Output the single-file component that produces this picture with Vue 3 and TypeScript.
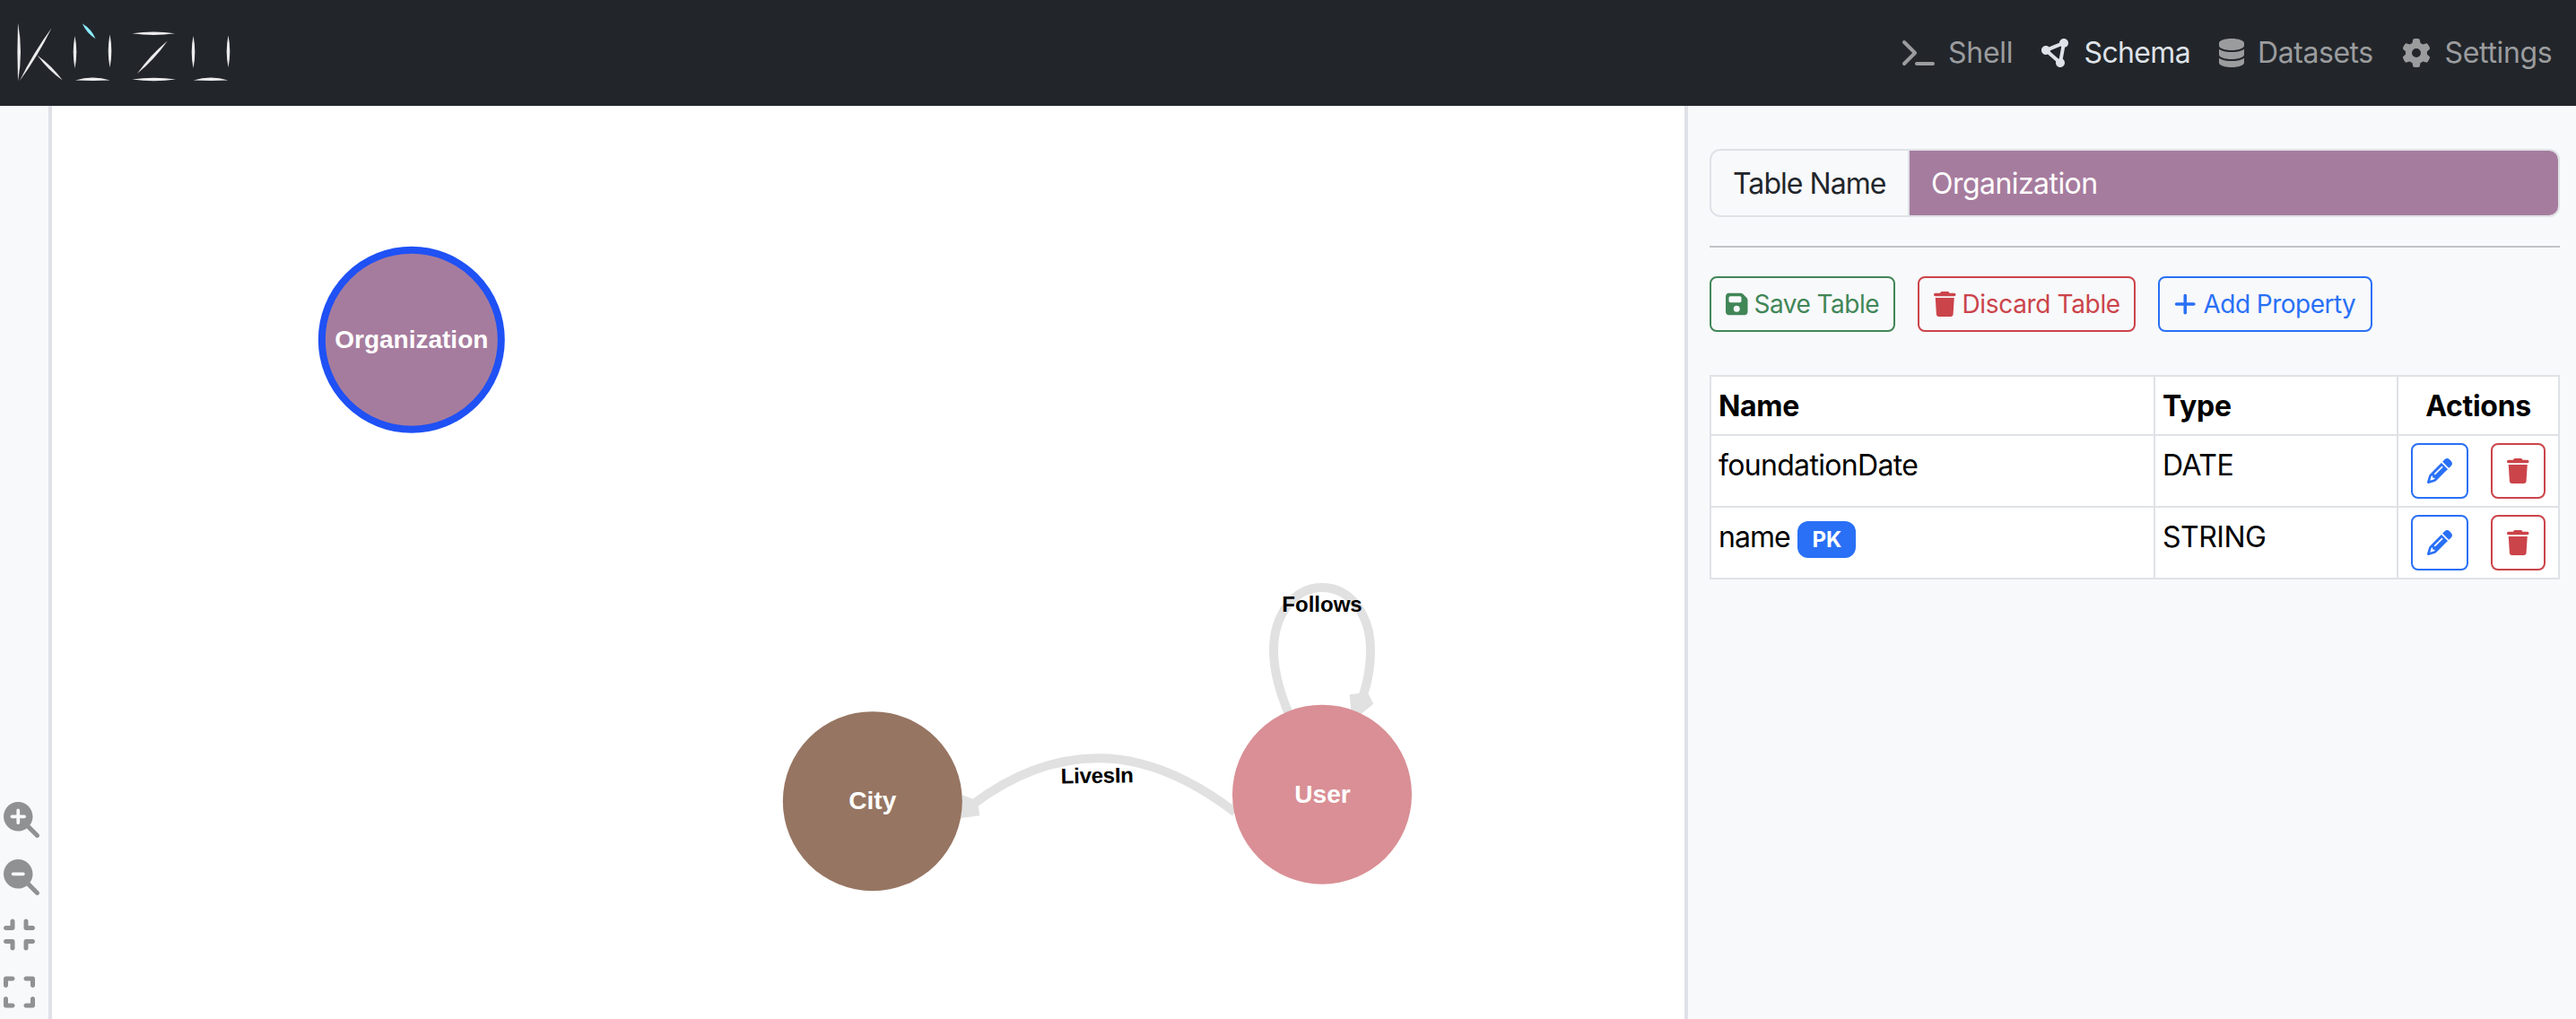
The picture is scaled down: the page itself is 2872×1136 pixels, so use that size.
<script setup lang="ts">
interface Icon {
  width: number
  path: string
}

const icons: Record<string, Icon> = {
  terminal: {
    width: 576,
    path: 'M9.4 86.6C-3.1 74.1-3.1 53.9 9.4 41.4s32.8-12.5 45.3 0l192 192c12.5 12.5 12.5 32.8 0 45.3l-192 192c-12.5 12.5-32.8 12.5-45.3 0s-12.5-32.8 0-45.3L178.7 256 9.4 86.6zM256 416H544c17.7 0 32 14.3 32 32s-14.3 32-32 32H256c-17.7 0-32-14.3-32-32s14.3-32 32-32z',
  },
  nodes: {
    width: 512,
    path: 'M418.4 157.9c35.3-8.3 61.6-40 61.6-77.9c0-44.2-35.8-80-80-80c-43.4 0-78.7 34.5-80 77.5L136.2 151.1C121.7 136.8 101.9 128 80 128c-44.2 0-80 35.8-80 80s35.8 80 80 80c12.2 0 23.8-2.7 34.1-7.6L259.7 407.8c-2.4 7.6-3.7 15.8-3.7 24.2c0 44.2 35.8 80 80 80s80-35.8 80-80c0-27.7-14-52.1-35.4-66.4l37.8-207.7zM156.3 232.2c2.2-6.9 3.5-14.2 3.7-21.7l183.8-73.5c3.6 3.5 7.4 6.7 11.6 9.5L317.6 354.1c-5.5 1.3-10.8 3.1-15.8 5.5L156.3 232.2z',
  },
  database: {
    width: 448,
    path: 'M448 80v48c0 44.2-100.3 80-224 80S0 172.2 0 128V80C0 35.8 100.3 0 224 0S448 35.8 448 80zM393.2 214.7c20.8-7.4 39.9-16.9 54.8-28.6V288c0 44.2-100.3 80-224 80S0 332.2 0 288V186.1c14.9 11.8 34 21.2 54.8 28.6C99.7 230.7 159.5 240 224 240s124.3-9.3 169.2-25.3zM0 346.1c14.9 11.8 34 21.2 54.8 28.6C99.7 390.7 159.5 400 224 400s124.3-9.3 169.2-25.3c20.8-7.4 39.9-16.9 54.8-28.6V432c0 44.2-100.3 80-224 80S0 476.2 0 432V346.1z',
  },
  gear: {
    width: 512,
    path: 'M495.9 166.6c3.2 8.7 .5 18.4-6.4 24.6l-43.3 39.4c1.1 8.3 1.7 16.8 1.7 25.4s-.6 17.1-1.7 25.4l43.3 39.4c6.9 6.2 9.6 15.9 6.4 24.6c-4.4 11.9-9.7 23.3-15.8 34.3l-4.7 8.1c-6.6 11-14 21.4-22.1 31.2c-5.9 7.2-15.7 9.6-24.5 6.8l-55.7-17.7c-13.4 10.3-28.2 18.9-44 25.4l-12.5 57.1c-2 9.1-9 16.3-18.2 17.8c-13.8 2.3-28 3.5-42.5 3.5s-28.7-1.2-42.5-3.5c-9.2-1.5-16.2-8.7-18.2-17.8l-12.5-57.1c-15.8-6.5-30.6-15.1-44-25.4L83.1 425.9c-8.8 2.8-18.6 .3-24.5-6.8c-8.1-9.8-15.5-20.2-22.1-31.2l-4.7-8.1c-6.1-11-11.4-22.4-15.8-34.3c-3.2-8.7-.5-18.4 6.4-24.6l43.3-39.4C64.6 273.1 64 264.6 64 256s.6-17.1 1.7-25.4L22.4 191.2c-6.9-6.2-9.6-15.9-6.4-24.6c4.4-11.9 9.7-23.3 15.8-34.3l4.7-8.1c6.6-11 14-21.4 22.1-31.2c5.9-7.2 15.7-9.6 24.5-6.8l55.7 17.7c13.4-10.3 28.2-18.9 44-25.4l12.5-57.1c2-9.1 9-16.3 18.2-17.8C227.3 1.2 241.5 0 256 0s28.7 1.2 42.5 3.5c9.2 1.5 16.2 8.7 18.2 17.8l12.5 57.1c15.8 6.5 30.6 15.1 44 25.4l55.7-17.7c8.8-2.8 18.6-.3 24.5 6.8c8.1 9.8 15.5 20.2 22.1 31.2l4.7 8.1c6.1 11 11.4 22.4 15.8 34.3zM256 336a80 80 0 1 0 0-160 80 80 0 1 0 0 160z',
  },
  zoomIn: {
    width: 512,
    path: 'M416 208c0 45.9-14.9 88.3-40 122.7L502.6 457.4c12.5 12.5 12.5 32.8 0 45.3s-32.8 12.5-45.3 0L330.7 376c-34.4 25.2-76.8 40-122.7 40C93.1 416 0 322.9 0 208S93.1 0 208 0S416 93.1 416 208zM184 296c0 13.3 10.7 24 24 24s24-10.7 24-24V232h64c13.3 0 24-10.7 24-24s-10.7-24-24-24H232V120c0-13.3-10.7-24-24-24s-24 10.7-24 24v64H120c-13.3 0-24 10.7-24 24s10.7 24 24 24h64v64z',
  },
  zoomOut: {
    width: 512,
    path: 'M416 208c0 45.9-14.9 88.3-40 122.7L502.6 457.4c12.5 12.5 12.5 32.8 0 45.3s-32.8 12.5-45.3 0L330.7 376c-34.4 25.2-76.8 40-122.7 40C93.1 416 0 322.9 0 208S93.1 0 208 0S416 93.1 416 208zM136 184c-13.3 0-24 10.7-24 24s10.7 24 24 24H280c13.3 0 24-10.7 24-24s-10.7-24-24-24H136z',
  },
  compress: {
    width: 448,
    path: 'M160 64c0-17.7-14.3-32-32-32s-32 14.3-32 32v64H32c-17.7 0-32 14.3-32 32s14.3 32 32 32h96c17.7 0 32-14.3 32-32V64zM32 320c-17.7 0-32 14.3-32 32s14.3 32 32 32H96v64c0 17.7 14.3 32 32 32s32-14.3 32-32V352c0-17.7-14.3-32-32-32H32zM352 64c0-17.7-14.3-32-32-32s-32 14.3-32 32v96c0 17.7 14.3 32 32 32h96c17.7 0 32-14.3 32-32s-14.3-32-32-32H352V64zM320 320c-17.7 0-32 14.3-32 32v96c0 17.7 14.3 32 32 32s32-14.3 32-32V384h64c17.7 0 32-14.3 32-32s-14.3-32-32-32H320z',
  },
  expand: {
    width: 448,
    path: 'M32 32C14.3 32 0 46.3 0 64v96c0 17.7 14.3 32 32 32s32-14.3 32-32V96h64c17.7 0 32-14.3 32-32s-14.3-32-32-32H32zM64 352c0-17.7-14.3-32-32-32s-32 14.3-32 32v96c0 17.7 14.3 32 32 32h96c17.7 0 32-14.3 32-32s-14.3-32-32-32H64V352zM320 32c-17.7 0-32 14.3-32 32s14.3 32 32 32h64v64c0 17.7 14.3 32 32 32s32-14.3 32-32V64c0-17.7-14.3-32-32-32H320zM448 352c0-17.7-14.3-32-32-32s-32 14.3-32 32v64H320c-17.7 0-32 14.3-32 32s14.3 32 32 32h96c17.7 0 32-14.3 32-32V352z',
  },
  save: {
    width: 448,
    path: 'M64 32C28.7 32 0 60.7 0 96V416c0 35.3 28.7 64 64 64H384c35.3 0 64-28.7 64-64V173.3c0-17-6.7-33.3-18.7-45.3L352 50.7C340 38.7 323.7 32 306.7 32H64zm0 96c0-17.7 14.3-32 32-32H288c17.7 0 32 14.3 32 32v64c0 17.7-14.3 32-32 32H96c-17.7 0-32-14.3-32-32V128zM224 288a64 64 0 1 1 0 128 64 64 0 1 1 0-128z',
  },
  trash: {
    width: 448,
    path: 'M135.2 17.7L128 32H32C14.3 32 0 46.3 0 64S14.3 96 32 96H416c17.7 0 32-14.3 32-32s-14.3-32-32-32H320l-7.2-14.3C307.4 6.8 296.3 0 284.2 0H163.8c-12.1 0-23.2 6.8-28.6 17.7zM416 128H32L53.2 467c1.6 25.3 22.6 45 47.9 45H346.9c25.3 0 46.3-19.7 47.9-45L416 128z',
  },
  plus: {
    width: 448,
    path: 'M256 80c0-17.7-14.3-32-32-32s-32 14.3-32 32V224H48c-17.7 0-32 14.3-32 32s14.3 32 32 32H192V432c0 17.7 14.3 32 32 32s32-14.3 32-32V288H400c17.7 0 32-14.3 32-32s-14.3-32-32-32H256V80z',
  },
  pencil: {
    width: 512,
    path: 'M410.3 231l11.3-11.3-33.9-33.9-62.1-62.1L291.7 89.8l-11.3 11.3-22.6 22.6L58.6 322.9c-10.4 10.4-18 23.3-22.2 37.4L1 480.7c-2.5 8.4-.2 17.5 6.1 23.7s15.3 8.5 23.7 6.1l120.3-35.4c14.1-4.2 27-11.8 37.4-22.2L387.7 253.7 410.3 231zM160 399.4l-9.1 22.7c-4 3.1-8.5 5.4-13.3 6.9L59.4 452l23-78.1c1.4-4.9 3.8-9.4 6.9-13.3l22.7-9.1v32c0 8.8 7.2 16 16 16h32zM362.7 18.7L348.3 33.2 325.7 55.8 314.3 67.1l33.9 33.9 62.1 62.1 33.9 33.9 11.3-11.3 22.6-22.6 14.5-14.5c25-25 25-65.5 0-90.5L453.3 18.7c-25-25-65.5-25-90.5 0zm-47.4 168l-144 144c-6.2 6.2-16.4 6.2-22.6 0s-6.2-16.4 0-22.6l144-144c6.2-6.2 16.4-6.2 22.6 0s6.2 16.4 0 22.6z',
  },
}

const viewBox = (name: string) => `0 0 ${icons[name].width} 512`

const navLinks = [
  { key: 'shell', label: 'Shell', icon: 'terminal', active: false },
  { key: 'schema', label: 'Schema', icon: 'nodes', active: true },
  { key: 'datasets', label: 'Datasets', icon: 'database', active: false },
  { key: 'settings', label: 'Settings', icon: 'gear', active: false },
]

const tools = ['zoomIn', 'zoomOut', 'compress', 'expand']

const actions = [
  { key: 'save', label: 'Save Table', icon: 'save' },
  { key: 'discard', label: 'Discard Table', icon: 'trash' },
  { key: 'add', label: 'Add Property', icon: 'plus' },
]

const properties = [
  { name: 'foundationDate', type: 'DATE', primary: false },
  { name: 'name', type: 'STRING', primary: true },
]

/* A stroke that tapers at both ends; a and b are the bulges on either side. */
function blade(x1: number, y1: number, x2: number, y2: number, a: number, b: number): string {
  const length = Math.hypot(x2 - x1, y2 - y1)
  const nx = (y2 - y1) / length
  const ny = -(x2 - x1) / length
  const mx = (x1 + x2) / 2
  const my = (y1 + y2) / 2
  return `M${x1} ${y1}Q${mx + nx * a * 2} ${my + ny * a * 2} ${x2} ${y2}Q${mx - nx * b * 2} ${my - ny * b * 2} ${x1} ${y1}Z`
}

const logoStrokes = [
  blade(20, 25.5, 20, 90.5, 3, 0.6),
  blade(57.5, 31.3, 22, 90, 1.6, 1.6),
  blade(41.7, 61.7, 69.8, 89.6, 1.6, 1.6),
  blade(83.5, 40, 83.5, 76.3, 1.8, 1.8),
  blade(122.5, 38.5, 122.5, 75.3, 1.8, 1.8),
  blade(84, 89.6, 122.7, 89.6, 3, 0.3),
  blade(147.3, 37.3, 195, 37.3, 1.8, 1.8),
  blade(186.8, 45.4, 153, 82, 1.7, 1.7),
  blade(147.3, 88.5, 196, 88.5, 1.8, 1.8),
  blade(215.5, 40, 215.5, 76, 1.8, 1.8),
  blade(254.5, 39.5, 254.5, 75, 1.8, 1.8),
  blade(215.7, 89.6, 254.3, 89.6, 3, 0.3),
]
const logoAccent = blade(91.8, 26.3, 106.6, 43.2, 1.8, 1.8)
</script>

<template>
  <div class="app">
    <header class="navbar">
      <svg class="logo" viewBox="0 0 300 118">
        <path v-for="(d, i) in logoStrokes" :key="i" :d="d" fill="#ececec" />
        <path :d="logoAccent" fill="#8cecfb" />
      </svg>
      <nav class="links">
        <a v-for="link in navLinks" :key="link.key" :class="['link', link.key, { active: link.active }]">
          <svg class="icon" :viewBox="viewBox(link.icon)"><path :d="icons[link.icon].path" /></svg>
          <span>{{ link.label }}</span>
        </a>
      </nav>
    </header>

    <div class="body">
      <aside class="tools">
        <svg v-for="tool in tools" :key="tool" class="tool" :viewBox="viewBox(tool)">
          <path :d="icons[tool].path" />
        </svg>
      </aside>

      <main class="canvas">
        <svg class="graph" viewBox="58 118 1820 1018">
          <g class="edges">
            <path d="M1437 796C1426 770 1420 748 1420 725C1420 685 1443 655 1474 655S1528 685 1528 725C1528 745 1524 764 1518 780" />
            <path d="M1377 905.5C1324 865 1275 845.3 1225.5 845.3S1130 862 1083 898" />
          </g>
          <g class="arrows">
            <path d="M1504.7 774.3L1515.3 773L1526 774L1531.3 784.7L1510 802L1506 790Z" />
            <path d="M1066 884L1083.7 890.3L1090.7 898.7L1092.3 909.3L1066 912.7Z" />
          </g>
          <g class="edge-labels">
            <text x="1474" y="682">Follows</text>
            <text class="lives-in" x="1223.3" y="872.8" transform="rotate(-0.9 1223.3 872.8)">LivesIn</text>
          </g>
          <circle class="organization" cx="458.8" cy="378.8" r="100" />
          <circle class="city" cx="972.8" cy="893.2" r="100" />
          <circle class="user" cx="1474" cy="885.7" r="100" />
          <g class="node-labels">
            <text x="458.8" y="388">Organization</text>
            <text x="972.8" y="902">City</text>
            <text x="1474.5" y="895">User</text>
          </g>
        </svg>
      </main>

      <section class="panel">
        <div class="name-group">
          <label class="name-label">Table Name</label>
          <div class="name-value">Organization</div>
        </div>
        <hr class="rule" />
        <div class="actions">
          <button v-for="action in actions" :key="action.key" :class="['btn', action.key]">
            <svg class="btn-icon" :viewBox="viewBox(action.icon)"><path :d="icons[action.icon].path" /></svg>
            <span>{{ action.label }}</span>
          </button>
        </div>
        <table class="properties">
          <colgroup>
            <col class="col-name" />
            <col class="col-type" />
            <col class="col-actions" />
          </colgroup>
          <thead>
            <tr>
              <th>Name</th>
              <th class="th-type">Type</th>
              <th class="th-actions">Actions</th>
            </tr>
          </thead>
          <tbody>
            <tr v-for="property in properties" :key="property.name">
              <td>
                <div class="cell">
                  <span :class="property.primary ? 'key-name' : 'plain-name'">{{ property.name }}</span>
                  <span v-if="property.primary" class="badge">PK</span>
                </div>
              </td>
              <td>{{ property.type }}</td>
              <td class="td-actions">
                <div class="row-actions">
                  <button class="btn edit">
                    <svg class="btn-icon" :viewBox="viewBox('pencil')"><path :d="icons.pencil.path" /></svg>
                  </button>
                  <button class="btn remove">
                    <svg class="btn-icon" :viewBox="viewBox('trash')"><path :d="icons.trash.path" /></svg>
                  </button>
                </div>
              </td>
            </tr>
          </tbody>
        </table>
      </section>
    </div>
  </div>
</template>

<style>
body {
  margin: 0;
  background: #fff;
}
</style>

<style scoped>
.app {
  display: flex;
  flex-direction: column;
  width: 2872px;
  height: 1136px;
  overflow: hidden;
  font-family: Inter, "Liberation Sans", sans-serif;
  font-size: 32px;
  line-height: 48px;
  letter-spacing: -0.5px;
  color: #000;
}

.navbar {
  display: flex;
  align-items: center;
  flex: none;
  height: 118px;
  background: #22262b;
}

.logo {
  width: 300px;
  height: 118px;
}

.links {
  display: flex;
  margin-left: auto;
}

.link {
  display: flex;
  align-items: center;
  gap: 15.5px;
  color: #9b9c9e;
}

.link.active {
  color: #dfe2e8;
}

.link.shell {
  width: 155.5px;
  letter-spacing: -0.25px;
}

.link.schema {
  width: 197.5px;
  letter-spacing: -0.65px;
}

.link.datasets {
  width: 204.5px;
  letter-spacing: -0.43px;
}

.link.settings {
  width: 194px;
  letter-spacing: -0.33px;
}

.icon {
  flex: none;
  height: 32px;
  fill: currentColor;
}

.body {
  display: flex;
  flex: 1;
  min-height: 0;
}

.tools {
  display: flex;
  flex-direction: column;
  justify-content: flex-end;
  align-items: flex-start;
  gap: 24px;
  flex: none;
  box-sizing: border-box;
  width: 58px;
  padding: 0 0 10px 4px;
  background: #f8f9fb;
  border-right: 4px solid #dfe1e7;
}

.tool {
  height: 40px;
  fill: #909193;
}

.canvas {
  flex: 1;
  min-width: 0;
  background: #fff;
}

.graph {
  display: block;
  width: 1820px;
  height: 1018px;
  font-family: "Liberation Sans", Arial, sans-serif;
  font-weight: 700;
  letter-spacing: 0;
}

.edges path {
  fill: none;
  stroke: #e1e1e1;
  stroke-width: 10;
}

.arrows path {
  fill: #e1e1e1;
}

.edge-labels text {
  font-size: 24px;
  text-anchor: middle;
  fill: #000;
}

.edge-labels .lives-in {
  letter-spacing: -0.25px;
}

.node-labels text {
  font-size: 28px;
  text-anchor: middle;
  fill: #fff;
}

.organization {
  fill: #a67c9e;
  stroke: #1f51f5;
  stroke-width: 8;
}

.city {
  fill: #967562;
}

.user {
  fill: #d98f95;
}

.panel {
  flex: none;
  box-sizing: border-box;
  width: 994px;
  padding: 48px 18px 0 24px;
  background: #f8f9fb;
  border-left: 4px solid #dfe1e7;
}

.name-group {
  display: flex;
  box-sizing: border-box;
  height: 76px;
  border: 2px solid #dfe2e6;
  border-radius: 12px;
  overflow: hidden;
}

.name-label {
  flex: none;
  box-sizing: border-box;
  width: 221px;
  padding: 13px 0 11px 24px;
  border-right: 2px solid #dfe2e6;
  color: #22262b;
  letter-spacing: -0.95px;
}

.name-value {
  flex: 1;
  padding: 13px 24px 11px;
  background: #a67c9e;
  color: #fff;
  letter-spacing: -0.55px;
}

.rule {
  height: 2px;
  margin: 32px 0;
  border: 0;
  background: #c1c3c5;
}

.actions {
  display: flex;
  gap: 25px;
}

.btn {
  display: flex;
  align-items: center;
  gap: 7px;
  box-sizing: border-box;
  height: 62px;
  padding: 0 16px;
  border: 2px solid currentColor;
  border-radius: 8px;
  background: transparent;
  font: inherit;
  font-size: 28px;
  line-height: 42px;
  white-space: nowrap;
}

.btn-icon {
  flex: none;
  height: 28px;
  fill: currentColor;
}

.save {
  width: 207px;
  color: #418657;
  letter-spacing: -0.52px;
}

.discard {
  width: 243px;
  color: #cb444a;
  letter-spacing: -0.35px;
}

.add {
  width: 239px;
  gap: 8px;
  color: #2970f6;
  letter-spacing: -0.53px;
}

.edit {
  width: 64px;
  color: #2970f6;
}

.remove {
  width: 61px;
  color: #cb444a;
}

.properties {
  width: 948px;
  margin-top: 48px;
  table-layout: fixed;
  border-collapse: separate;
  border-spacing: 0;
  border: solid #dfe2e6;
  border-width: 2px 0 0 2px;
  background: #fff;
}

.col-name {
  width: 495px;
}

.col-type {
  width: 271px;
}

.col-actions {
  width: 180px;
}

th,
td {
  padding: 9px 8px 7px;
  border: solid #dfe2e6;
  border-width: 0 2px 2px 0;
  text-align: left;
  vertical-align: top;
}

th {
  font-weight: 700;
  letter-spacing: -0.3px;
}

.th-actions {
  text-align: center;
}

.td-actions {
  padding: 8px;
}

.cell {
  display: flex;
  align-items: flex-start;
  gap: 8.5px;
}

.plain-name {
  letter-spacing: -0.68px;
}

.key-name {
  letter-spacing: -0.95px;
}

.badge {
  box-sizing: border-box;
  width: 65px;
  height: 41px;
  margin-top: 6px;
  border-radius: 12px;
  background: #2970f6;
  color: #fff;
  font-size: 24px;
  font-weight: 700;
  line-height: 41px;
  letter-spacing: -0.2px;
  text-align: center;
}

.row-actions {
  display: flex;
  justify-content: center;
  gap: 25px;
}
</style>
